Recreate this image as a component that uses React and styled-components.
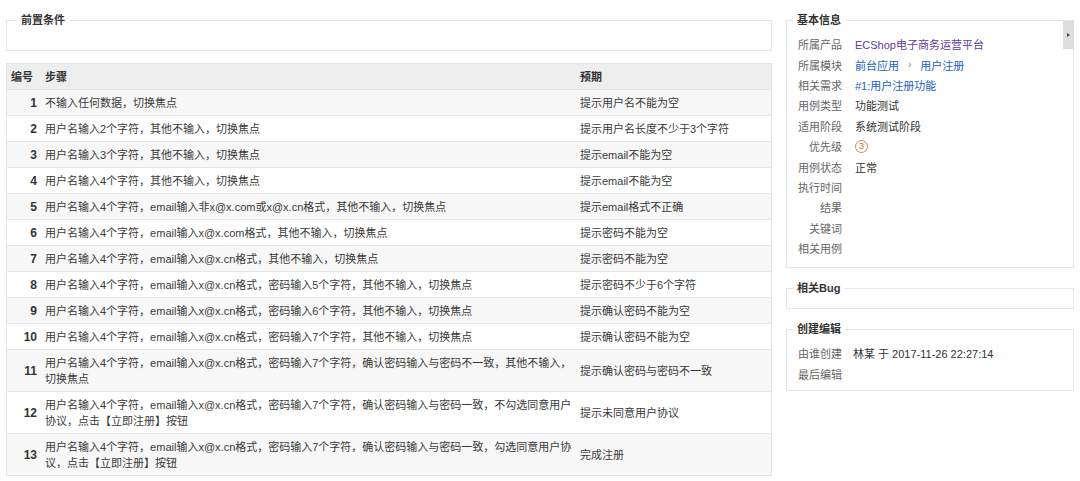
import React from 'react';
import styled, { createGlobalStyle } from 'styled-components';

const GlobalStyle = createGlobalStyle`
  body {
    margin: 0;
    background: #fff;
    font-family: "Liberation Sans", "Noto Sans CJK SC", sans-serif;
    font-size: 11px;
    color: #333;
  }
`;

const Page = styled.div`
  display: flex;
  align-items: flex-start;
  gap: 14px;
  padding: 12px 6px 0 6px;
`;

const Main = styled.div`
  width: 766px;
  display: flex;
  flex-direction: column;
  gap: 12px;
`;

const Side = styled.div`
  width: 288px;
  display: flex;
  flex-direction: column;
  gap: 12px;
`;

const Fieldset = styled.fieldset`
  position: relative;
  margin: 0;
  min-width: 0;
  padding: ${p => p.$pad || '0 10px'};
  border: 1px solid #e6e6e6;
`;

const Legend = styled.legend`
  margin-left: ${p => p.$shift || 0}px;
  padding: 0 4px;
  font-weight: bold;
  line-height: 16px;
  color: #333;
`;

const Blank = styled.div`
  height: ${p => p.$h}px;
`;

const Toggle = styled.div`
  position: absolute;
  right: -1px;
  top: -7px;
  width: 11px;
  height: 28px;
  background: #dedede;
  display: flex;
  align-items: center;
  justify-content: center;
  &::after {
    content: '';
    border-left: 3px solid #3b4a66;
    border-top: 2.5px solid transparent;
    border-bottom: 2.5px solid transparent;
  }
`;

const Table = styled.table`
  width: 100%;
  border-collapse: collapse;
  border: 1px solid #e3e3e3;
  table-layout: fixed;
`;

const Th = styled.th`
  background: #eeeeee;
  text-align: left;
  font-weight: bold;
  color: #333;
  line-height: 16px;
  padding: 4.5px 4px;
  width: ${p => (p.$w ? `${p.$w}px` : 'auto')};
`;

const Tr = styled.tr`
  background: ${p => (p.$odd ? '#f7f7f7' : '#fff')};
  border-top: 1px solid #e6e6e6;
`;

const Td = styled.td`
  line-height: 16px;
  padding: 4.5px 4px;
  vertical-align: middle;
  color: #3a3a3a;
`;

const NumTd = styled(Td)`
  text-align: right;
  font-weight: bold;
  font-size: 12px;
  color: #333;
`;

const InfoRow = styled.div`
  display: flex;
  align-items: center;
  height: 20.4px;
`;

const Label = styled.span`
  width: 45px;
  text-align: right;
  color: #666;
  flex-shrink: 0;
  margin-right: ${p => p.$gap || 13}px;
`;

const Value = styled.span`
  color: #333;
  display: flex;
  align-items: center;
  gap: 9px;
`;

const Link = styled.span`
  color: ${p => (p.$visited ? '#5b3c9c' : '#2060c0')};
`;

const Sep = styled.span`
  color: #888;
  font-size: 10px;
`;

const Pri = styled.span`
  width: 11px;
  height: 11px;
  border: 1.5px solid #d08a4c;
  border-radius: 50%;
  color: #c27630;
  font-size: 9px;
  line-height: 11px;
  text-align: center;
`;

const steps = [
  ['不输入任何数据，切换焦点', '提示用户名不能为空'],
  ['用户名输入2个字符，其他不输入，切换焦点', '提示用户名长度不少于3个字符'],
  ['用户名输入3个字符，其他不输入，切换焦点', '提示email不能为空'],
  ['用户名输入4个字符，其他不输入，切换焦点', '提示email不能为空'],
  ['用户名输入4个字符，email输入非x@x.com或x@x.cn格式，其他不输入，切换焦点', '提示email格式不正确'],
  ['用户名输入4个字符，email输入x@x.com格式，其他不输入，切换焦点', '提示密码不能为空'],
  ['用户名输入4个字符，email输入x@x.cn格式，其他不输入，切换焦点', '提示密码不能为空'],
  ['用户名输入4个字符，email输入x@x.cn格式，密码输入5个字符，其他不输入，切换焦点', '提示密码不少于6个字符'],
  ['用户名输入4个字符，email输入x@x.cn格式，密码输入6个字符，其他不输入，切换焦点', '提示确认密码不能为空'],
  ['用户名输入4个字符，email输入x@x.cn格式，密码输入7个字符，其他不输入，切换焦点', '提示确认密码不能为空'],
  ['用户名输入4个字符，email输入x@x.cn格式，密码输入7个字符，确认密码输入与密码不一致，其他不输入，切换焦点', '提示确认密码与密码不一致'],
  ['用户名输入4个字符，email输入x@x.cn格式，密码输入7个字符，确认密码输入与密码一致，不勾选同意用户协议，点击【立即注册】按钮', '提示未同意用户协议'],
  ['用户名输入4个字符，email输入x@x.cn格式，密码输入7个字符，确认密码输入与密码一致，勾选同意用户协议，点击【立即注册】按钮', '完成注册'],
];

const basic = [
  ['所属产品', <Link $visited>ECShop电子商务运营平台</Link>],
  ['所属模块', <><Link>前台应用</Link><Sep>›</Sep><Link>用户注册</Link></>],
  ['相关需求', <Link>#1:用户注册功能</Link>],
  ['用例类型', '功能测试'],
  ['适用阶段', '系统测试阶段'],
  ['优先级', <Pri>3</Pri>],
  ['用例状态', '正常'],
  ['执行时间', ''],
  ['结果', ''],
  ['关键词', ''],
  ['相关用例', ''],
];

export default function App() {
  return (
    <>
      <GlobalStyle />
      <Page>
        <Main>
          <Fieldset>
            <Legend>前置条件</Legend>
            <Blank $h={22} />
          </Fieldset>
          <Table>
            <thead>
              <tr>
                <Th $w={26}>编号</Th>
                <Th $w={527}>步骤</Th>
                <Th>预期</Th>
              </tr>
            </thead>
            <tbody>
              {steps.map(([step, expect], i) => (
                <Tr key={i} $odd={i % 2 === 0}>
                  <NumTd>{i + 1}</NumTd>
                  <Td>{step}</Td>
                  <Td>{expect}</Td>
                </Tr>
              ))}
            </tbody>
          </Table>
        </Main>
        <Side>
          <Fieldset $pad="6px 10px 9px">
            <Legend $shift={-4}>基本信息</Legend>
            <Toggle />
            {basic.map(([k, v]) => (
              <InfoRow key={k}>
                <Label>{k}</Label>
                <Value>{v}</Value>
              </InfoRow>
            ))}
          </Fieldset>
          <Fieldset>
            <Legend $shift={-4}>相关Bug</Legend>
            <Blank $h={12} />
          </Fieldset>
          <Fieldset $pad="6px 10px 6px">
            <Legend $shift={-4}>创建编辑</Legend>
            <InfoRow>
              <Label $gap={11}>由谁创建</Label>
              <Value>林某 于 2017-11-26 22:27:14</Value>
            </InfoRow>
            <InfoRow>
              <Label $gap={11}>最后编辑</Label>
              <Value />
            </InfoRow>
          </Fieldset>
        </Side>
      </Page>
    </>
  );
}
